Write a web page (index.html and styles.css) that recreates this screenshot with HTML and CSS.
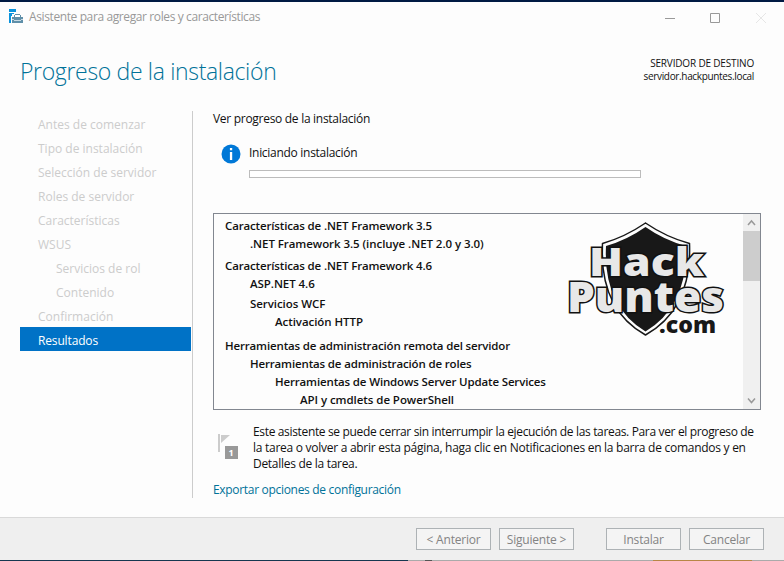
FILE: index.html
```html
<!DOCTYPE html>
<html lang="es">
<head>
<meta charset="utf-8">
<title>Asistente para agregar roles y características</title>
<link rel="stylesheet" href="styles.css">
</head>
<body>
<div class="window">
  <header class="titlebar">
    <svg class="app-icon" width="15" height="15" viewBox="0 0 15 15" shape-rendering="crispEdges">
      <path fill="#0a93dc" d="M0 0h7v3H0zM0 4h5v1H3v2H2v7H0z"/>
      <path fill="#5f8fa9" d="M6 5h5v1h1v2h2v2H3V8h2V6h1z"/>
      <path fill="#fff" d="M6 6h5v2H6z"/>
      <path fill="#5f8fa9" d="M3 11h2v1h1v-1h5v1h1v-1h2v3H3zM4 10h9v1H4z"/>
      <path fill="#c9dae3" d="M3 10h2v1H3zM5 11h7v1H5zM12 10h2v1h-2z"/>
    </svg>
    <span class="title">Asistente para agregar roles y características</span>
    <svg class="controls" width="126" height="12" viewBox="0 0 126 12" fill="none">
      <path stroke="#999" d="M0 5.500h10M45.500 .5h9v9h-9z"/>
      <path stroke="#e6e6e6" d="M91 0l10 10M101 0L91 10"/>
    </svg>
  </header>
  <div class="heading">
    <h1>Progreso de la instalación</h1>
    <div class="target"><div class="target-label">SERVIDOR DE DESTINO</div><div class="target-name">servidor.hackpuntes.local</div></div>
  </div>
  <div class="body">
    <nav class="steps">
      <div class="step"><span>Antes de comenzar</span></div>
      <div class="step"><span>Tipo de instalación</span></div>
      <div class="step"><span>Selección de servidor</span></div>
      <div class="step"><span>Roles de servidor</span></div>
      <div class="step"><span>Características</span></div>
      <div class="step"><span>WSUS</span></div>
      <div class="step sub"><span>Servicios de rol</span></div>
      <div class="step sub"><span>Contenido</span></div>
      <div class="step"><span>Confirmación</span></div>
      <div class="step active"><span>Resultados</span></div>
    </nav>
    <main class="content">
      <p class="intro">Ver progreso de la instalación</p>
      <div class="status">
        <svg width="20" height="20" viewBox="0 0 20 20"><circle cx="10" cy="10" r="9.500" fill="#0078d7"/><path fill="#fff" d="M8.900 4h2.300v2.300H8.900zM8.900 8h2.300v8H8.900z"/></svg>
        <div class="status-info"><p>Iniciando instalación</p><div class="progress"></div></div>
      </div>
      <div class="features">
        <div class="tree">
          <div class="row l0">Características de .NET Framework 3.5</div>
          <div class="row l1 loose">.NET Framework 3.5 (incluye .NET 2.0 y 3.0)</div>
          <div class="row l0 gap4">Características de .NET Framework 4.6</div>
          <div class="row l1 loose">ASP.NET 4.6</div>
          <div class="row l1 gap2 loose">Servicios WCF</div>
          <div class="row l2 loose">Activación HTTP</div>
          <div class="row l0 gap6">Herramientas de administración remota del servidor</div>
          <div class="row l1">Herramientas de administración de roles</div>
          <div class="row l2">Herramientas de Windows Server Update Services</div>
          <div class="row l3 loose">API y cmdlets de PowerShell</div>
        </div>
        <svg class="logo" width="162" height="120" viewBox="565 219 162 120">
          <path fill="#fdfdfd" stroke="#181818" stroke-width="1.500" d="M645.500 223Q625 237 602.500 243.500Q599 309 645.500 335Q692 309 689.500 243.500Q666 237 645.500 223z"/>
          <path fill="#181818" d="M645.500 227Q627 240 606 246Q603 306 645.500 331.500Q688 306 686 246Q664 240 645.500 227z"/>
          <g class="logo-word">
            <text x="589" y="276" font-size="39" textLength="115" lengthAdjust="spacingAndGlyphs">Hack</text>
            <text x="567" y="312" font-size="42" textLength="157" lengthAdjust="spacingAndGlyphs">Puntes</text>
          </g>
          <text class="logo-com" x="659" y="333" font-size="23" textLength="57" lengthAdjust="spacingAndGlyphs">.com</text>
        </svg>
        <div class="scrollbar">
          <svg width="17" height="17" viewBox="0 0 17 17" fill="none" stroke="#999" stroke-width="1.500"><path d="M5 11l3.500-4 3.500 4"/></svg>
          <div class="thumb"></div>
          <svg width="17" height="17" viewBox="0 0 17 17" fill="none" stroke="#999" stroke-width="1.500"><path d="M5 6.500l3.500 4 3.500-4"/></svg>
        </div>
      </div>
      <div class="note">
        <svg width="22" height="27" viewBox="0 0 22 27"><path fill="#ccc" d="M0 0h2v18H0zM3 1h9L3 9z"/><path fill="#999" d="M7 12h13v13H7z"/><text class="flag-number" x="10.500" y="22">1</text></svg>
        <p><span class="n1">Este asistente se puede cerrar sin interrumpir la ejecución de las tareas. Para ver el progreso de</span><br><span class="n2">la tarea o volver a abrir esta página, haga clic en Notificaciones en la barra de comandos y en</span><br><span class="n3">Detalles de la tarea.</span></p>
      </div>
      <a class="export">Exportar opciones de configuración</a>
    </main>
  </div>
  <footer class="footer">
    <button>&lt; Anterior</button><button>Siguiente &gt;</button><button class="apart">Instalar</button><button>Cancelar</button>
  </footer>
  <div class="desktop-edge"></div>
</div>
</body>
</html>
```
FILE: styles.css
```css
* { box-sizing: border-box; }
body { margin: 0; font: 12px/16px "Open Sans", "Noto Sans", sans-serif; color: #111; letter-spacing: -0.29px; }
p, h1 { margin: 0; }
svg { display: block; flex: none; }
.window { width: 784px; height: 561px; display: flex; flex-direction: column; background: #fdfdfd; border-top: 2px solid #001a43; overflow: hidden; white-space: nowrap; }
.titlebar { height: 40px; flex: none; display: flex; align-items: flex-start; padding: 7px 0 0 9px; }
.title { margin-left: 5px; color: #999; letter-spacing: -0.39px; }
.controls { margin: 4px -7px 0 auto; }
.heading { height: 68px; flex: none; display: flex; justify-content: space-between; padding: 12px 30px 0 20px; }
h1 { font-size: 23px; line-height: 34px; font-weight: 300; color: #007299; letter-spacing: -0.34px; }
.target { font-size: 10px; line-height: 13px; text-align: right; padding-top: 3px; }
.target-label { letter-spacing: -0.17px; }
.target-name { letter-spacing: -0.34px; }
.body { height: 407px; flex: none; display: flex; }
.steps { width: 193px; height: 387px; border-right: 1px solid #ccc; margin-top: 1px; padding: 0 1px 0 20px; }
.step { height: 24px; line-height: 27px; padding-left: 18px; color: #ccc; letter-spacing: 0; }
.sub { padding-left: 36px; }
.active { background: #0072c6; color: #fff; letter-spacing: -0.15px; }
.content { width: 548px; margin-left: 20px; }
.intro { padding-top: 1px; }
.status { display: flex; height: 69px; margin-top: 17px; padding: 0 0 0 8px; }
.status-info { margin-left: 8px; }
.progress { width: 392px; height: 8px; border: 1px solid #bcbcbc; background: #fff; margin-top: 9px; }
.status-info p { padding-top: 1px; }
.features { height: 197px; display: flex; border: 1px solid #828790; position: relative; background: #fdfdfd; }
.tree { flex: 1; padding-top: 3px; font-weight: 600; font-size: 11.500px; }
.row { line-height: 18px; height: 18px; letter-spacing: -0.15px; }
.loose { letter-spacing: -0.06px; }
.l0 { padding-left: 11px; }
.l1 { padding-left: 36px; }
.l2 { padding-left: 61px; }
.l3 { padding-left: 86px; }
.gap2 { margin-top: 2px; }
.gap4 { margin-top: 4px; }
.gap6 { margin-top: 6px; }
.logo { position: absolute; left: 351px; top: 5px; letter-spacing: 0; }
.logo-word { font-weight: 800; fill: #e8e8e8; stroke: #111; stroke-width: 3px; paint-order: stroke; }
.logo-com { font-weight: 800; fill: #181818; }
.scrollbar { width: 17px; display: flex; flex-direction: column; background: #f0f0f0; }
.scrollbar .thumb { height: 50px; background: #cdcdcd; margin-bottom: auto; }
.note { display: flex; margin-top: 13px; padding-left: 5px; height: 53px; }
.note svg { margin: 11px 13px 0 0; }
.flag-number { font-size: 9px; font-weight: 700; fill: #fff; }
.note p { padding-top: 1px; }
.n1 { letter-spacing: -0.345px; }
.n2 { letter-spacing: -0.27px; }
.export { display: block; margin-top: 6px; color: #007299; letter-spacing: -0.31px; }
.footer { flex: 1; background: #efefef; border-top: 1px solid #d9d9d9; display: flex; padding: 10px 20px 0 0; gap: 8px; justify-content: flex-end; }
button { width: 75px; height: 22px; padding: 2px 0 0; font: 12px/18px "Open Sans", sans-serif; letter-spacing: -0.2px; color: #838383; background: #f4f4f4; border: 1px solid #adb2b5; }
.apart { margin-left: 24px; }
.desktop-edge { height: 1px; flex: none; background: linear-gradient(to right, #163750 408px, #aaa 408px 425px, #555 425px 432px, #aaa 432px 653px, #b88645 653px 752px, #aaa 752px); }
```
